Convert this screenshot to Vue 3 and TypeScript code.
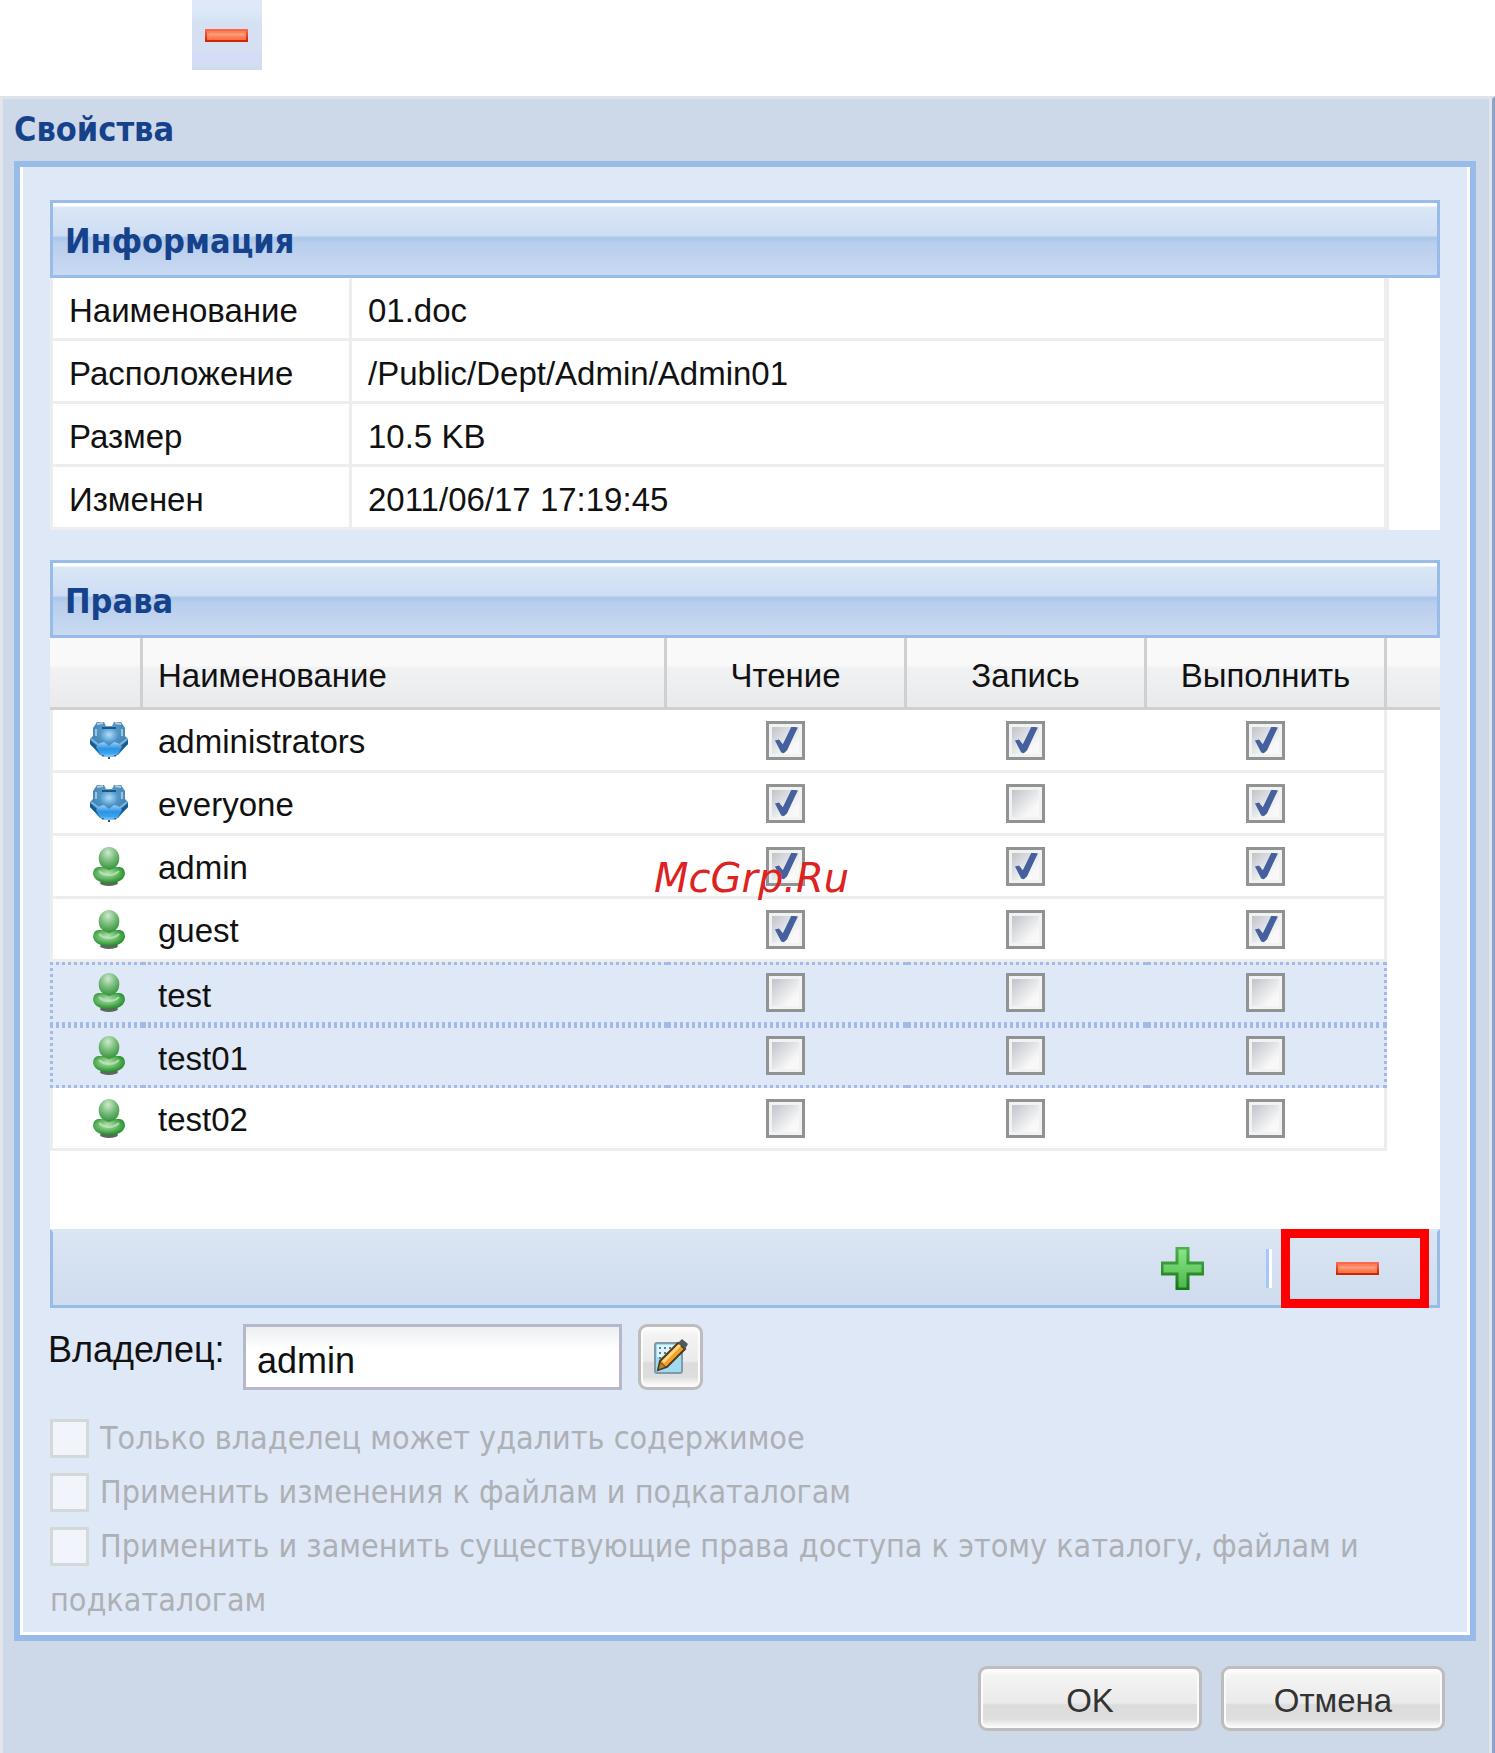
<script setup lang="ts">
import { ref } from 'vue'

interface InfoRow {
  label: string
  value: string
}

interface Permission {
  name: string
  kind: 'group' | 'user'
  read: boolean
  write: boolean
  execute: boolean
  selected: boolean
}

const info: InfoRow[] = [
  { label: 'Наименование', value: '01.doc' },
  { label: 'Расположение', value: '/Public/Dept/Admin/Admin01' },
  { label: 'Размер', value: '10.5 KB' },
  { label: 'Изменен', value: '2011/06/17 17:19:45' },
]

const permissions = ref<Permission[]>([
  { name: 'administrators', kind: 'group', read: true, write: true, execute: true, selected: false },
  { name: 'everyone', kind: 'group', read: true, write: false, execute: true, selected: false },
  { name: 'admin', kind: 'user', read: true, write: true, execute: true, selected: false },
  { name: 'guest', kind: 'user', read: true, write: false, execute: true, selected: false },
  { name: 'test', kind: 'user', read: false, write: false, execute: false, selected: true },
  { name: 'test01', kind: 'user', read: false, write: false, execute: false, selected: true },
  { name: 'test02', kind: 'user', read: false, write: false, execute: false, selected: false },
])

const owner = ref('admin')

const options: string[] = [
  'Только владелец может удалить содержимое',
  'Применить изменения к файлам и подкаталогам',
  'Применить и заменить существующие права доступа к этому каталогу, файлам и подкаталогам',
]
</script>

<template>
  <svg class="defs" aria-hidden="true">
    <defs>
      <linearGradient id="minus-fill" x1="0" y1="0" x2="0" y2="1">
        <stop offset="0" stop-color="#ff6a45" />
        <stop offset="0.4" stop-color="#ffa07c" />
        <stop offset="1" stop-color="#f4562c" />
      </linearGradient>
      <linearGradient id="minus-edge" x1="0" y1="0" x2="0" y2="1">
        <stop offset="0" stop-color="#f9694a" />
        <stop offset="1" stop-color="#cc2600" />
      </linearGradient>
      <linearGradient id="plus-fill" x1="0" y1="0" x2="0" y2="1">
        <stop offset="0" stop-color="#8ae887" />
        <stop offset="1" stop-color="#4db44b" />
      </linearGradient>
      <linearGradient id="plus-edge" x1="0" y1="0" x2="0" y2="1">
        <stop offset="0" stop-color="#4fb04f" />
        <stop offset="1" stop-color="#137813" />
      </linearGradient>
      <radialGradient id="user-head" cx="0.45" cy="0.25" r="0.75">
        <stop offset="0" stop-color="#cdeacd" />
        <stop offset="0.5" stop-color="#79bd7c" />
        <stop offset="1" stop-color="#34913a" />
      </radialGradient>
      <radialGradient id="user-body" cx="0.45" cy="0.4" r="0.6">
        <stop offset="0" stop-color="#b5e2b2" />
        <stop offset="0.5" stop-color="#6cbb6c" />
        <stop offset="1" stop-color="#1f8c28" />
      </radialGradient>
      <radialGradient id="group-back" cx="0.5" cy="0.3" r="0.7">
        <stop offset="0" stop-color="#6fa6cc" />
        <stop offset="1" stop-color="#2a75ac" />
      </radialGradient>
      <radialGradient id="group-head" cx="0.5" cy="0.45" r="0.6">
        <stop offset="0" stop-color="#b4dcf6" />
        <stop offset="1" stop-color="#3a8cc8" />
      </radialGradient>
      <linearGradient id="group-body" x1="0" y1="0" x2="0" y2="1">
        <stop offset="0" stop-color="#9fd0f4" />
        <stop offset="0.45" stop-color="#2b93e4" />
        <stop offset="0.75" stop-color="#3aa3ee" />
        <stop offset="1" stop-color="#8ccdf8" />
      </linearGradient>
      <symbol id="icon-minus" viewBox="0 0 43 43">
        <rect x="1" y="16" width="41" height="11" fill="url(#minus-fill)" stroke="url(#minus-edge)" stroke-width="2" />
        <rect x="3" y="18" width="37" height="7" fill="none" stroke="#ff7d58" stroke-width="1" />
      </symbol>
      <symbol id="icon-plus" viewBox="0 0 43 43">
        <path d="M16 1h11v15h15v11H27v15H16V27H1V16h15z" fill="url(#plus-fill)" stroke="url(#plus-edge)" stroke-width="3" />
      </symbol>
      <symbol id="icon-user" viewBox="0 0 40 40">
        <ellipse cx="20" cy="37" rx="9" ry="3" fill="#5e665e" />
        <path d="M9 21Q4 22 4 28Q6 37 20 37Q34 37 36 28Q36 22 31 21Z" fill="url(#user-body)" />
        <path d="M20 1Q27 1 30 9Q32 21 20 24Q8 21 10 9Q13 1 20 1Z" fill="url(#user-head)" />
        <path d="M10 25Q14 29 20 29Q26 29 30 25" fill="none" stroke="#c3e8c0" stroke-width="2" opacity="0.7" />
      </symbol>
      <symbol id="icon-group" viewBox="0 0 40 40">
        <path d="M4 8L8 2h7l2 4h6l2-4h7l4 6v8l3 3v5L29 35H11L1 24v-5l3-3z" fill="url(#group-back)" />
        <path d="M1 20l10 9v4L1 24zM39 20l-10 9v4l10-9z" fill="#165a92" />
        <path d="M2 19l9 7M38 19l-9 7" stroke="#7db6dd" stroke-width="2" />
        <path d="M13 8h14l2 9-4 6H15l-4-6z" fill="url(#group-head)" />
        <path d="M13 8h14" stroke="#175a8c" stroke-width="2" />
        <path d="M11 23l4-1 5 4 5-4 4 1 4 4-4 7-4 3H15l-4-3-4-7z" fill="url(#group-body)" />
        <path d="M12 35h3l-1 2zM25 35h3l-2 2zM19 37h2v2h-2z" fill="#45525c" />
        <path d="M8 4l6-1M26 3l6 1" fill="none" stroke="#b4cddd" stroke-width="2" />
        <path d="M7 9v7M33 9v7" stroke="#9cc4e0" stroke-width="2" />
      </symbol>
      <symbol id="icon-edit" viewBox="0 0 36 36">
        <rect x="2" y="4" width="27" height="30" rx="2" fill="#9fdcf2" stroke="#7f9aa8" stroke-width="2" />
        <rect x="4" y="6" width="23" height="12" fill="#dff3fb" />
        <path d="M6 9h2m3 0h2m3 0h2M6 14h2m3 0h2m3 0h2M6 19h2m3 0h2" stroke="#5d8193" stroke-width="2" />
        <path d="M7 22L25 4l7 6-18 18-9 3z" fill="#f6a02c" stroke="#4a3a22" stroke-width="2" />
        <path d="M10 23L27 6" stroke="#ffd885" stroke-width="3" />
        <path d="M5 31l2-8 6 5z" fill="#b48529" stroke="#4a3a22" stroke-width="1" />
        <path d="M25 4l4-4 6 5-3 5z" fill="#55565c" />
      </symbol>
    </defs>
  </svg>

  <div class="page">
    <div class="sample">
      <svg class="tool-icon"><use href="#icon-minus" /></svg>
    </div>

    <main class="dialog">
      <h1 class="title">Свойства</h1>

      <div class="body">
        <section>
          <h2 class="heading">Информация</h2>
          <div class="sheet">
            <table class="info">
              <tbody>
                <tr v-for="row in info" :key="row.label">
                  <th scope="row">{{ row.label }}</th>
                  <td>{{ row.value }}</td>
                </tr>
              </tbody>
            </table>
          </div>
        </section>

        <section class="rights">
          <h2 class="heading">Права</h2>
          <div class="sheet sheet-tall">
            <table class="grid">
              <colgroup>
                <col class="col-icon" />
                <col />
                <col class="col-flag" />
                <col class="col-flag" />
                <col class="col-flag" />
                <col class="col-scroll" />
              </colgroup>
              <thead>
                <tr>
                  <th></th>
                  <th scope="col" class="name">Наименование</th>
                  <th scope="col">Чтение</th>
                  <th scope="col">Запись</th>
                  <th scope="col">Выполнить</th>
                  <th></th>
                </tr>
              </thead>
              <tbody>
                <tr v-for="row in permissions" :key="row.name" :class="{ selected: row.selected }">
                  <td class="kind">
                    <svg class="kind-icon"><use :href="'#icon-' + row.kind" /></svg>
                  </td>
                  <td class="name">{{ row.name }}</td>
                  <td><input v-model="row.read" class="flag" type="checkbox" :aria-label="row.name + ': Чтение'" /></td>
                  <td><input v-model="row.write" class="flag" type="checkbox" :aria-label="row.name + ': Запись'" /></td>
                  <td class="last"><input v-model="row.execute" class="flag" type="checkbox" :aria-label="row.name + ': Выполнить'" /></td>
                  <td class="rest"></td>
                </tr>
              </tbody>
            </table>
            <span class="watermark">McGrp.Ru</span>
          </div>
          <div class="toolbar">
            <button class="tool" type="button" aria-label="Добавить">
              <svg class="tool-icon"><use href="#icon-plus" /></svg>
            </button>
            <span class="separator"></span>
            <button class="tool tool-marked" type="button" aria-label="Удалить">
              <svg class="tool-icon"><use href="#icon-minus" /></svg>
            </button>
          </div>
        </section>

        <div class="owner">
          <label for="owner">Владелец:</label>
          <input id="owner" v-model="owner" type="text" />
          <button class="push edit" type="button" aria-label="Изменить владельца">
            <svg class="edit-icon"><use href="#icon-edit" /></svg>
          </button>
        </div>

        <div class="options">
          <label v-for="text in options" :key="text" class="option">
            <input type="checkbox" disabled />{{ text }}
          </label>
        </div>
      </div>

      <footer class="actions">
        <button class="push" type="button">OK</button>
        <button class="push" type="button">Отмена</button>
      </footer>
    </main>
  </div>
</template>

<style>
body {
  margin: 0;
  background: #fff;
}
</style>

<style scoped>
* {
  box-sizing: border-box;
}

.defs {
  position: absolute;
  width: 0;
  height: 0;
}

.page {
  display: flex;
  flex-direction: column;
  gap: 26px;
  min-height: 100vh;
  font-family: 'Liberation Sans', Arial, sans-serif;
  font-size: 33px;
  color: #111;
}

.sample {
  display: flex;
  align-items: center;
  justify-content: center;
  width: 70px;
  height: 70px;
  margin-left: 192px;
  padding-right: 2px;
  background: linear-gradient(#dfe8f8 0 10px, #d7e6f5 16px, #d5e1f3 24px 50px, #d6dcf6 54px 62px, #cddeee 66px);
}

.tool-icon {
  display: block;
  width: 43px;
  height: 43px;
}

.dialog {
  flex: 1;
  padding: 0 16px 22px 11px;
  border-top: 3px solid #dde3e9;
  border-left: 3px solid #e2e6ea;
  border-right: 3px solid #8ba3c6;
  background: #cdd9e8;
  box-shadow: inset -3px 0 #e2e6ea;
}

.title,
.heading {
  margin: 0;
  font-family: 'DejaVu Sans Condensed', 'DejaVu Sans', Tahoma, sans-serif;
  font-size: 34px;
  font-weight: bold;
  font-stretch: condensed;
  color: #15428b;
}

.title {
  height: 62px;
  line-height: 60px;
}

.body {
  padding: 33px 30px 8px;
  border: 6px solid #99bbe8;
  background: #dfe8f6;
  box-shadow: inset 3px -3px #fff, inset -3px 0 #fff;
}

.heading {
  height: 78px;
  padding: 0 12px;
  border: 3px solid #99bbe8;
  line-height: 76px;
  background: linear-gradient(#fff 0 3px, #dae7f6 4px, #cdddf3 33px, #aec8ea 34px 36px, #b8ceed 40px, #c9daf2 72px);
}

.sheet {
  background: #fff;
}

.sheet-tall {
  position: relative;
  height: 591px;
}

.rights {
  margin-top: 30px;
}

table {
  border-collapse: separate;
  border-spacing: 0;
  table-layout: fixed;
}

th {
  font-weight: normal;
  text-align: left;
}

.info {
  width: calc(100% - 51px);
}

.info th,
.info td {
  height: 63px;
  padding: 6px 16px 0;
  border-bottom: 3px solid #ededed;
}

.info th {
  width: 302px;
  border-left: 3px solid #ededed;
  border-right: 3px solid #ededed;
}

.info td {
  border-right: 5px solid #ededed;
}

.grid {
  width: 100%;
  text-align: center;
}

.col-icon {
  width: 93px;
}

.col-flag {
  width: 240px;
}

.col-scroll {
  width: 53px;
}

.grid thead th {
  height: 72px;
  padding: 6px 0 0;
  border-right: 3px solid #d0d0d0;
  border-bottom: 3px solid #d0d0d0;
  text-align: center;
  background: linear-gradient(#f9f9f9 0 28px, #f1f2f4 29px, #e9eaec);
}

.grid thead th:last-child {
  border-right: 0;
}

.grid tbody td {
  height: 63px;
  padding: 0 3px 0 0;
  border-bottom: 3px solid #ededed;
}

.grid thead .name {
  padding-left: 15px;
  text-align: left;
}

.grid tbody .name {
  padding: 4px 0 0 15px;
  text-align: left;
}

.grid tbody .kind {
  padding: 0 0 0 21px;
  border-left: 3px solid #ededed;
}

.grid tbody .last {
  border-right: 3px solid #ededed;
  padding: 0;
}

.grid tbody .rest {
  border: 0;
}

.selected td:not(.rest) {
  border-top: 3px dotted #a3bae9;
  border-bottom: 3px dotted #a3bae9;
  background: #dfe8f6;
}

.grid .selected .kind {
  border-left: 3px dotted #a3bae9;
}

.grid .selected .last {
  border-right: 3px dotted #a3bae9;
}

.grid .selected td:not(.name) {
  padding-bottom: 3px;
}

.kind-icon {
  display: block;
  width: 40px;
  height: 40px;
  margin: 0 auto;
}

.flag {
  appearance: none;
  display: block;
  width: 39px;
  height: 39px;
  margin: 0 auto;
  border: 3px solid #8f9392;
  background: linear-gradient(135deg, #bfc4cb, #f8f8f8 75%) content-box, #f2f2f2;
  padding: 3px;
}

.flag:checked::before {
  content: '';
  display: block;
  width: 27px;
  height: 27px;
  background: #46609e;
  clip-path: polygon(11% 52%, 26% 48%, 40% 66%, 72% 0, 96% 4%, 84% 28%, 56% 88%, 44% 99%, 34% 96%);
}

.watermark {
  position: absolute;
  top: 220px;
  left: 604px;
  font-family: 'DejaVu Sans', Verdana, sans-serif;
  font-size: 40px;
  font-style: oblique;
  line-height: 40px;
  color: #dd2222;
}

.toolbar {
  display: flex;
  align-items: center;
  justify-content: flex-end;
  height: 79px;
  border: 3px solid #99bbe8;
  border-top-color: #dbe7f3;
  background: linear-gradient(#dae5f3, #cedcee);
}

.tool {
  display: grid;
  place-items: center;
  padding: 0;
  border: 0;
  background: none;
}

.tool:first-child {
  margin-right: 62px;
}

.tool-marked {
  flex: none;
  width: 148px;
  height: 79px;
  margin: 0 8px 0 9px;
  padding-left: 4px;
  border: 9px solid #f00;
}

.separator {
  width: 6px;
  height: 39px;
  border-left: 3px solid #a5c7fa;
  border-right: 3px solid #fff;
}

.owner {
  display: flex;
  align-items: flex-start;
  margin-top: 16px;
  font-size: 36px;
}

.owner label {
  width: 195px;
  margin-left: -2px;
  line-height: 52px;
  white-space: nowrap;
}

.owner input {
  width: 379px;
  height: 66px;
  padding: 8px 11px 0;
  border: 3px solid #b5b8c8;
  font: inherit;
  color: inherit;
  background: linear-gradient(#ebeff0, #fff 22px);
}

.push {
  width: 224px;
  height: 65px;
  padding: 4px 0 0;
  border: 3px solid #bdbdbd;
  border-radius: 9px;
  font: inherit;
  color: #333;
  background: linear-gradient(#fff, #f3f3f3 8px, #ebebeb 34px, #dcdcdc 36px, #dedede 50px, #f8f8f8 57px);
  box-shadow: inset 0 0 0 2px #fbfbfb;
}

.edit {
  display: grid;
  place-items: center;
  width: 65px;
  height: 66px;
  margin-left: 16px;
  padding: 0;
}

.edit-icon {
  display: block;
  width: 36px;
  height: 36px;
}

.options {
  margin-top: 21px;
  font-family: 'DejaVu Sans Condensed', 'DejaVu Sans', Tahoma, sans-serif;
  font-size: 32px;
  font-stretch: condensed;
  line-height: 54px;
  color: #adb0b5;
}

.option {
  display: block;
}

.option input {
  appearance: none;
  width: 39px;
  height: 39px;
  margin: 0 11px 0 0;
  border: 3px solid #d3d8d8;
  background: #f1f5fb;
  vertical-align: -9px;
}

.actions {
  display: flex;
  justify-content: flex-end;
  gap: 19px;
  margin-top: 25px;
  padding-right: 31px;
}
</style>
